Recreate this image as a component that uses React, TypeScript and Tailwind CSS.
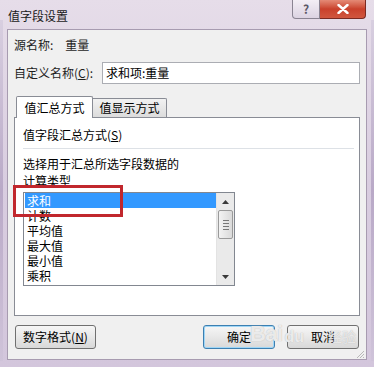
import React from 'react';

const items = ['求和', '计数', '平均值', '最大值', '最小值', '乘积'];

function WinButton({ label, focused = false, w }: { label: React.ReactNode; focused?: boolean; w: string }) {
  return (
    <div
      className={`${w} h-[24px] rounded-[3px] border flex items-center justify-center text-[12px] text-black bg-gradient-to-b from-[#f6f6f6] via-[#e8e8e8] to-[#d8d8d8] ${
        focused ? 'border-[#3c7fb1] shadow-[inset_0_0_0_1px_#9fd6f6]' : 'border-[#707070]'
      }`}
    >
      {label}
    </div>
  );
}

export default function App() {
  return (
    <div
      className="relative w-[374px] h-[367px] overflow-hidden bg-gradient-to-b from-[#e6dde9] via-[#d9cde0] to-[#d3c6dc] text-black"
      style={{ fontFamily: '"Noto Sans CJK SC", "Noto Sans", sans-serif' }}
    >
      {/* title bar */}
      <div className="relative h-[29px] flex items-center pl-[8px]">
        <span className="text-[12px] leading-none mt-[2px] text-[#1a1a1a]">值字段设置</span>
        <div className="absolute top-0 right-[8px] flex">
          <div className="w-[28px] h-[19px] border border-t-0 border-[#8a8492] rounded-bl-[4px] bg-gradient-to-b from-[#f3eef5] to-[#dcd3e2] flex items-center justify-center text-[12px] font-bold text-[#5b5866] leading-none">
            ?
          </div>
          <div className="w-[46px] h-[19px] border border-t-0 border-l-0 border-[#7a2a22] rounded-br-[4px] bg-gradient-to-b from-[#e48a76] via-[#c9412c] to-[#d0563f] flex items-center justify-center">
            <svg width="12" height="10" viewBox="0 0 12 10">
              <path d="M1.5 1 L10.5 9 M10.5 1 L1.5 9" stroke="#fff" strokeWidth="2.4" strokeLinecap="round" />
            </svg>
          </div>
        </div>
      </div>

      {/* client area */}
      <div className="mx-[7px] h-[331px] border border-[#a79bb0] bg-[#f0f0f0] flex flex-col">
        <div className="px-[6px] pt-[7px] h-[23px] flex items-center gap-[12px] text-[12px] leading-[16px] text-[#1e1e1e]">
          <span>源名称:</span>
          <span>重量</span>
        </div>

        <div className="mt-[9px] pl-[6px] pr-[6px] flex items-center">
          <span className="w-[88px] text-[12px] text-[#1e1e1e]">
            自定义名称(<span className="underline">C</span>):
          </span>
          <div className="flex-1 h-[22px] border border-[#abadb3] bg-white flex items-center px-[3px] text-[12px]">
            求和项:重量
          </div>
        </div>

        {/* tabs */}
        <div className="mt-[12px] px-[6px]">
          <div className="flex items-end h-[21px] pl-[2px]">
            <div className="relative z-10 w-[77px] h-[22px] -mb-[1px] border border-b-0 border-[#898c95] bg-white flex items-center justify-center text-[12px] rounded-t-[2px]">
              值汇总方式
            </div>
            <div className="w-[74px] h-[19px] border border-l-0 border-b-0 border-[#898c95] bg-gradient-to-b from-[#f2f2f2] to-[#dcdcdc] flex items-center justify-center text-[12px] rounded-tr-[2px]">
              值显示方式
            </div>
          </div>
          <div className="h-[199px] border border-[#898c95] bg-white pl-[8px] pr-[5px] pt-[9px]">
            <div className="text-[12px] leading-[16px]">
              值字段汇总方式(<span className="underline">S</span>)
            </div>
            <div className="mt-[5px] h-px bg-[#dde1e6]" />
            <div className="mt-[6px] text-[12px] leading-[17px]">
              <div>选择用于汇总所选字段数据的</div>
              <div>计算类型</div>
            </div>

            {/* listbox */}
            <div className="mt-[3px] w-[212px] h-[94px] border border-[#828790] bg-white flex">
              <div className="flex-1 pl-[1px]">
                {items.map((it, i) => (
                  <div
                    key={it}
                    className={`h-[15px] leading-[15px] text-[12px] pl-[2px] overflow-hidden ${
                      i === 0 ? 'bg-[#3399ff] text-white' : 'text-black'
                    }`}
                  >
                    {it}
                  </div>
                ))}
              </div>
              <div className="w-[18px] bg-[#eaeaea] border-l border-[#e3e3e3] flex flex-col items-center">
                <div className="h-[17px] flex items-center justify-center">
                  <svg width="7" height="4" viewBox="0 0 7 4">
                    <path d="M0 4 L3.5 0 L7 4 Z" fill="#3a3a3a" />
                  </svg>
                </div>
                <div className="w-[15px] h-[29px] rounded-[2px] border border-[#9a9a9a] bg-gradient-to-r from-[#f3f3f3] to-[#dadada] flex flex-col items-center justify-center gap-[2px]">
                  <div className="w-[6px] h-px bg-[#777]" />
                  <div className="w-[6px] h-px bg-[#777]" />
                  <div className="w-[6px] h-px bg-[#777]" />
                  <div className="w-[6px] h-px bg-[#777]" />
                </div>
                <div className="flex-1" />
                <div className="h-[17px] flex items-center justify-center">
                  <svg width="7" height="4" viewBox="0 0 7 4">
                    <path d="M0 0 L3.5 4 L7 0 Z" fill="#3a3a3a" />
                  </svg>
                </div>
              </div>
            </div>
          </div>
        </div>

        {/* buttons */}
        <div className="mt-[9px] px-[7px] flex items-center">
          <WinButton
            w="w-[81px]"
            label={
              <span>
                数字格式(<span className="underline">N</span>)
              </span>
            }
          />
          <div className="flex-1" />
          <WinButton w="w-[72px]" focused label="确定" />
          <div className="w-[12px]" />
          <WinButton w="w-[72px]" label="取消" />
        </div>

        <div className="flex-1 flex items-end justify-end pr-[1px] pb-[1px]">
          <svg width="10" height="10" viewBox="0 0 10 10">
            <path d="M9 2 L2 9 M9 5 L5 9 M9 8 L8 9" stroke="#b8b8b8" strokeWidth="1" />
          </svg>
        </div>
      </div>

      {/* outer window edges */}
      <div className="absolute left-0 top-[20px] bottom-[6px] w-[3px] bg-gradient-to-b from-[#d8cfe0] via-[#b9a9c7] to-[#cfc3d9]" />
      <div className="absolute right-0 top-[20px] bottom-[6px] w-[3px] bg-gradient-to-b from-[#d8cfe0] via-[#b9a9c7] to-[#cfc3d9]" />

      {/* annotation */}
      <div className="absolute left-[13px] top-[185px] w-[110px] h-[32px] border-[3px] border-[#c1272d]" />

      {/* watermark */}
      <div
        className="absolute left-[250px] top-[323px] flex items-end gap-[2px] text-white/75 pointer-events-none"
        style={{ fontFamily: '"Liberation Sans", sans-serif', textShadow: '0 0 1px #aaa' }}
      >
        <span className="text-[22px] font-bold leading-none tracking-tight">Bai</span>
        <span className="text-[16px] font-bold leading-none">du</span>
      </div>
      <div
        className="absolute left-[328px] top-[326px] text-[14px] text-white/70 pointer-events-none"
        style={{ textShadow: '0 0 1px #aaa' }}
      >
        经验
      </div>
    </div>
  );
}
